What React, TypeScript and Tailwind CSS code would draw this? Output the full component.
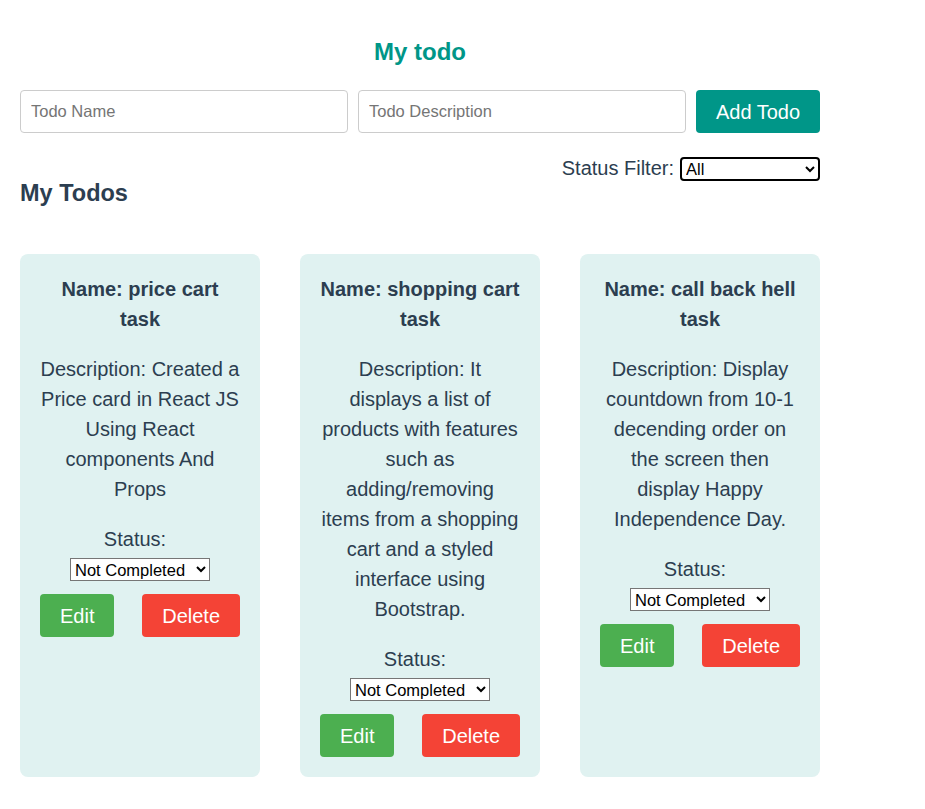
import { useState } from 'react';

type Todo = {
  id: number;
  name: string;
  description: string;
  status: 'Not Completed' | 'Completed';
};

const initialTodos: Todo[] = [
  {
    id: 1,
    name: 'price cart task',
    description: 'Created a Price card in React JS Using React components And Props',
    status: 'Not Completed',
  },
  {
    id: 2,
    name: 'shopping cart task',
    description:
      'It displays a list of products with features such as adding/removing items from a shopping cart and a styled interface using Bootstrap.',
    status: 'Not Completed',
  },
  {
    id: 3,
    name: 'call back hell task',
    description: 'Display countdown from 10-1 decending order on the screen then display Happy Independence Day.',
    status: 'Not Completed',
  },
];

function TodoCard({ todo }: { todo: Todo }) {
  return (
    <div className="bg-[#e0f2f1] rounded-lg p-5 text-center text-[20px] leading-[30px]">
      <h3 className="font-bold">Name: {todo.name}</h3>
      <p className="mt-5">Description: {todo.description}</p>
      <div className="mt-5">
        <div className="pr-[10px]">Status:</div>
        <div className="h-[30px] pt-[1px] flex items-center justify-center">
          <select
            defaultValue={todo.status}
            className="w-[140px] h-[23px] border border-[#767676] bg-white text-black text-[16.5px] leading-5"
          >
            <option>Not Completed</option>
            <option>Completed</option>
          </select>
        </div>
      </div>
      <div className="mt-[10px] flex justify-between">
        <button className="bg-[#4caf50] text-white rounded px-5 h-[43px]">Edit</button>
        <button className="bg-[#f44336] text-white rounded px-5 h-[43px]">Delete</button>
      </div>
    </div>
  );
}

export default function App() {
  const [todos] = useState<Todo[]>(initialTodos);

  return (
    <div className="min-h-screen bg-white font-['Liberation_Sans',Arial,sans-serif] text-[#2c3e50]">
      <div className="w-[800px] ml-5 pt-9 pb-8">
        <h1 className="text-center text-[24px] leading-8 font-bold text-[#009688]">My todo</h1>

        <div className="mt-[22px] flex gap-[10px]">
          <input
            placeholder="Todo Name"
            className="flex-1 min-w-0 h-[43px] px-[10px] border border-[#cccccc] rounded text-[16.5px] placeholder:text-[#757575]"
          />
          <input
            placeholder="Todo Description"
            className="flex-1 min-w-0 h-[43px] px-[10px] border border-[#cccccc] rounded text-[16.5px] placeholder:text-[#757575]"
          />
          <button className="w-[124px] h-[43px] bg-[#009688] text-white text-[20px] rounded">Add Todo</button>
        </div>

        <div className="mt-[22px] h-[26px] flex items-center justify-end gap-[6px] text-[20px]">
          <span>Status Filter:</span>
          <select className="w-[140px] h-[24px] mt-[1px] border-2 border-black rounded bg-white text-black text-[16.5px]">
            <option>All</option>
            <option>Completed</option>
            <option>Not Completed</option>
          </select>
        </div>

        <h2 className="text-[23.5px] leading-6 font-bold">My Todos</h2>

        <div className="mt-[49px] grid grid-cols-3 gap-10">
          {todos.map((t) => (
            <TodoCard key={t.id} todo={t} />
          ))}
        </div>
      </div>
    </div>
  );
}
